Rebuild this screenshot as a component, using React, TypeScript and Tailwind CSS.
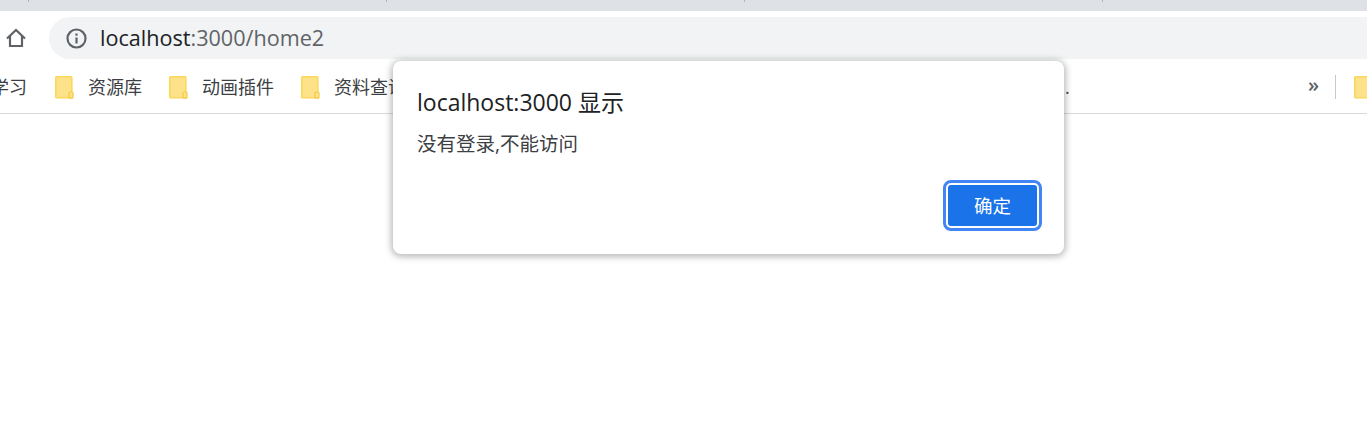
import React from "react";

const uiFont = "font-['Open_Sans','Noto_Sans_CJK_SC',sans-serif]";

const FolderIcon = () => (
  <svg width="19" height="23" viewBox="0 0 19 23" className="shrink-0">
    <rect x="0.8" y="0.8" width="16" height="21" rx="0.8" fill="#fee28a" stroke="#fbd75b" strokeWidth="1.6" />
    <rect x="14" y="16" width="4" height="6.2" rx="1" fill="#fee28a" stroke="#f6c945" strokeWidth="1.2" />
  </svg>
);

const HomeIcon = () => (
  <svg width="22" height="22" viewBox="0 0 22 22" fill="none" stroke="#5f6368" strokeWidth="2.2">
    <path d="M2 11.5 11 3l9 8.5" />
    <path d="M5 9v10h12V9" />
  </svg>
);

const InfoIcon = () => (
  <svg width="21" height="21" viewBox="0 0 21 21" fill="none">
    <circle cx="10.5" cy="10.5" r="9" stroke="#5f6368" strokeWidth="2.2" />
    <rect x="9.4" y="9.5" width="2.2" height="6" fill="#5f6368" />
    <rect x="9.4" y="5.5" width="2.2" height="2.2" fill="#5f6368" />
  </svg>
);

const Bookmark = ({ label, className }: { label: string; className: string }) => (
  <div className={`flex items-center shrink-0 ${className}`}>
    <FolderIcon />
    <span className="ml-[14px] text-[18px] text-[#3c4043] whitespace-nowrap">{label}</span>
  </div>
);

export default function App() {
  return (
    <div className={`relative h-[425px] w-[1367px] overflow-hidden bg-white ${uiFont}`}>
      <div className="flex h-[11px] items-start gap-[357px] bg-[#dee1e6] pl-[28px]">
        <div className="h-[2px] w-px bg-[#b0b4b9]" />
        <div className="h-[2px] w-px bg-[#b0b4b9]" />
        <div className="h-[2px] w-px bg-[#b0b4b9]" />
        <div className="h-[2px] w-px bg-[#b0b4b9]" />
      </div>

      <div className="flex h-[62px] items-start pt-[6px]">
        <div className="mt-[10px] ml-[5px] mr-[22px]">
          <HomeIcon />
        </div>
        <div className="flex h-[42px] flex-1 items-center rounded-l-[21px] bg-[#f1f3f4] pl-[17px]">
          <InfoIcon />
          <span className="ml-[13px] text-[21.6px] text-[#202124]">
            localhost<span className="text-[#5f6368]">:3000/home2</span>
          </span>
        </div>
      </div>

      <div className="flex h-[41px] items-center overflow-hidden border-b border-[#d9d9d9] pb-[12px]">
        <span className="ml-[-9px] mr-[28px] text-[18px] text-[#3c4043] whitespace-nowrap">学习</span>
        <Bookmark label="资源库" className="mr-[27px]" />
        <Bookmark label="动画插件" className="mr-[27px]" />
        <Bookmark label="资料查询" className="" />
        <span className="ml-[659px] text-[18px] leading-[28px] text-[#3c4043]">.</span>
        <div className="flex-1" />
        <span className="mb-[4px] text-[20px] font-semibold leading-[24px] text-[#5f6368]">»</span>
        <div className="ml-[16px] mr-[18px] h-[24px] w-px bg-[#c8c8c8]" />
        <div className="w-[13px] overflow-hidden">
          <FolderIcon />
        </div>
      </div>

      <div className="absolute left-[393px] top-[61px] flex h-[193px] w-[671px] flex-col rounded-[8px] bg-white px-[24px] pt-[25px] shadow-[0_1px_6px_2px_rgba(60,64,67,0.35)]">
        <div className="text-[23px] leading-[32px] text-[#202124]">localhost:3000 显示</div>
        <div className="mt-[13px] text-[19.5px] leading-[26px] text-[#3c4043]">没有登录,不能访问</div>
        <div className="mt-[26px] flex justify-end">
          <button
            type="button"
            className="mr-[1px] h-[45px] w-[93px] rounded-[5px] border-2 border-white bg-[#1a73e8] pt-[1px] text-[18.5px] text-white outline-3 outline-[#4285f4]"
          >
            确定
          </button>
        </div>
      </div>
    </div>
  );
}
